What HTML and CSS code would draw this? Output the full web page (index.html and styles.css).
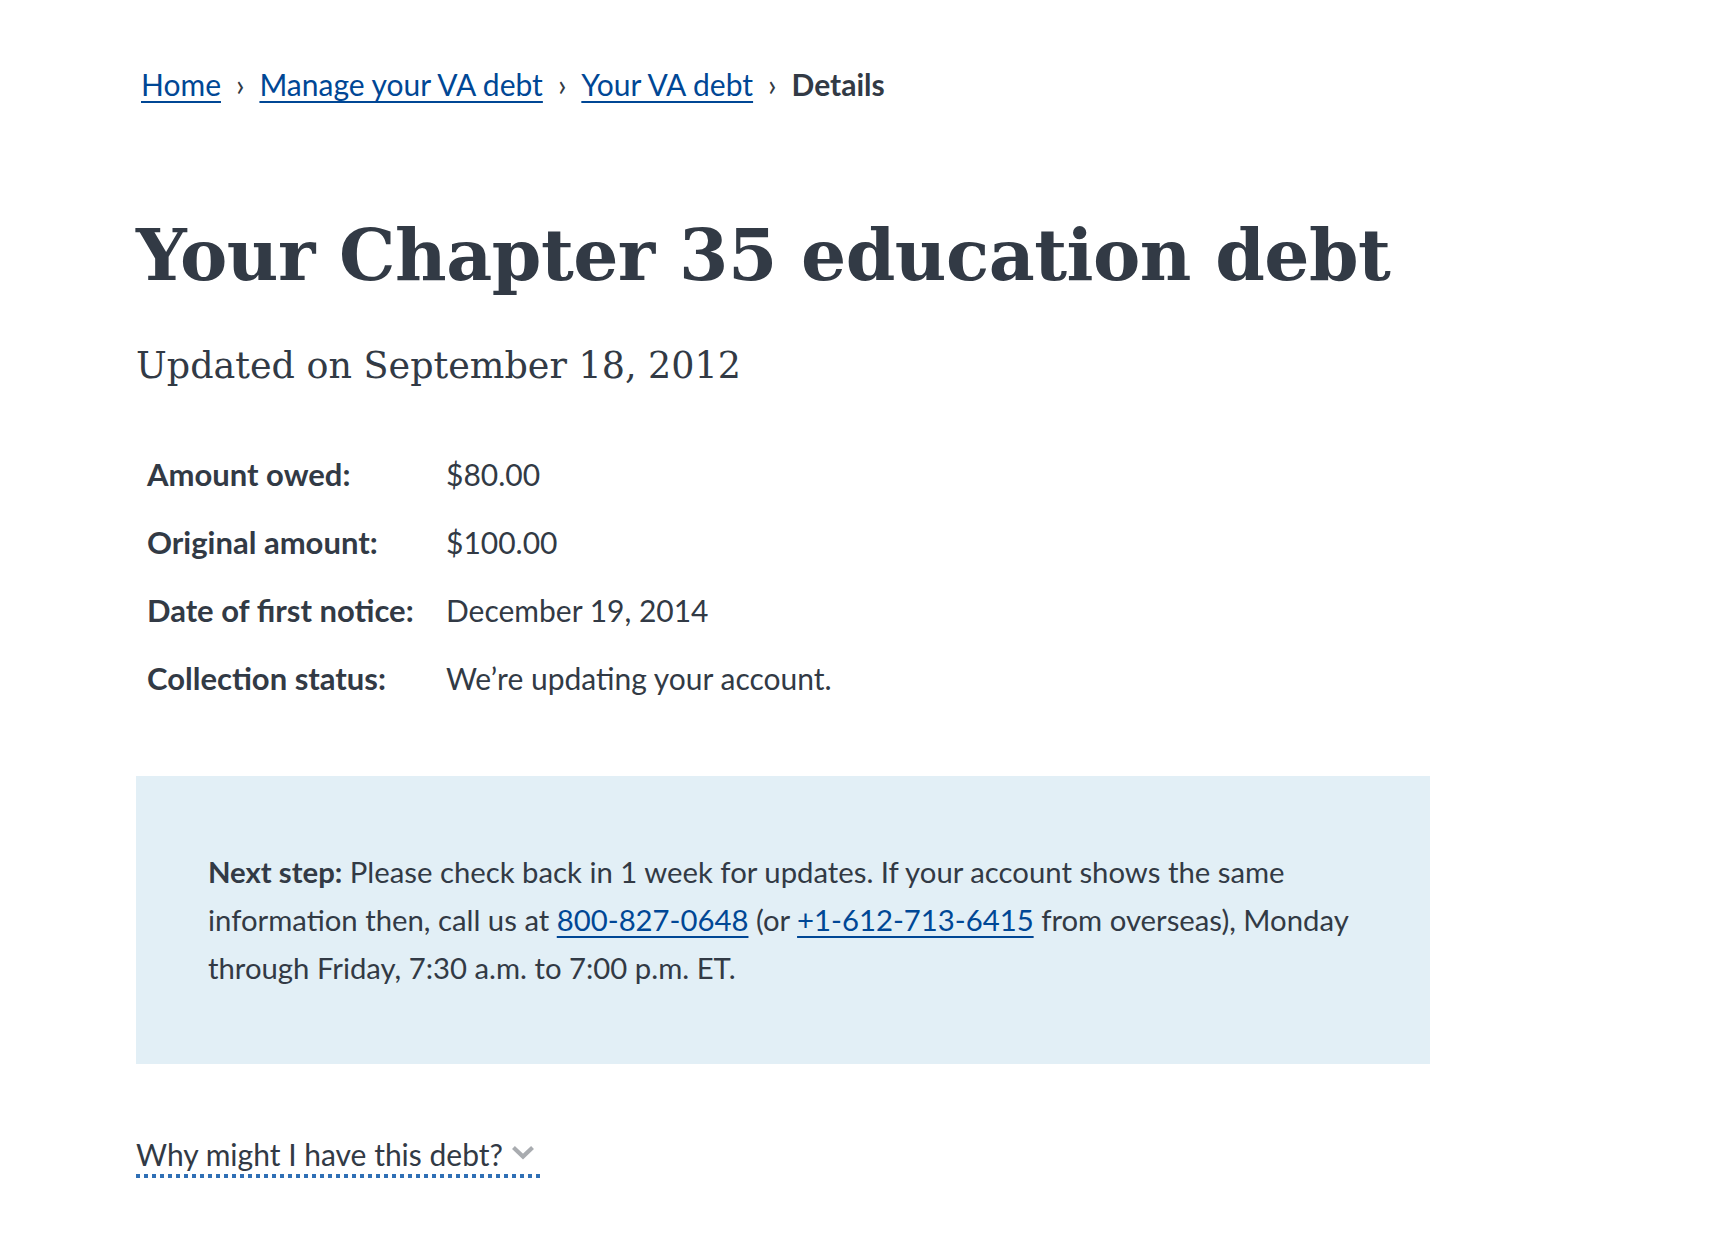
FILE: index.html
```html
<!DOCTYPE html>
<html lang="en">
<head>
<meta charset="utf-8">
<title>Your Chapter 35 education debt</title>
<link rel="stylesheet" href="styles.css">
</head>
<body>
<main class="page">
  <nav class="breadcrumbs" aria-label="Breadcrumb">
    <a href="#" class="crumb">Home</a><span class="sep">›</span><a href="#" class="crumb">Manage your VA debt</a><span class="sep">›</span><a href="#" class="crumb">Your VA debt</a><span class="sep">›</span><span class="current">Details</span>
  </nav>

  <h1 class="title">Your Chapter 35 education debt</h1>
  <h2 class="updated">Updated on September 18, 2012</h2>

  <dl class="facts">
    <div class="fact"><dt>Amount owed:</dt><dd>$80.00</dd></div>
    <div class="fact"><dt>Original amount:</dt><dd>$100.00</dd></div>
    <div class="fact"><dt>Date of first notice:</dt><dd>December 19, 2014</dd></div>
    <div class="fact"><dt>Collection status:</dt><dd>We’re updating your account.</dd></div>
  </dl>

  <div class="alert">
    <p><strong>Next step:</strong> Please check back in 1 week for updates. If your account shows the same information then, call us at <a href="#">800-827-0648</a> (or <a href="#">+1-612-713-6415</a> from overseas), Monday through Friday, 7:30 a.m. to 7:00 p.m. ET.</p>
  </div>

  <button class="why" type="button">Why might I have this debt?<svg class="chev" width="22" height="14" viewBox="0 0 22 14" aria-hidden="true"><path d="M3 3 L11 10.5 L19 3" fill="none" stroke="#a9acb0" stroke-width="4.2" stroke-linecap="square"/></svg></button>
</main>
</body>
</html>
```
FILE: styles.css
```css
html, body {
  margin: 0;
  padding: 0;
  background: #ffffff;
}

body {
  color: #323a45;
  font-family: Lato, "Noto Sans", sans-serif;
}

.page {
  padding: 63px 0 120px 136px;
}

.breadcrumbs {
  padding-left: 5px;
  font-size: 30px;
  line-height: 42px;
  height: 42px;
  white-space: nowrap;
}

.crumb {
  color: #004795;
  text-decoration: underline;
  text-decoration-thickness: 2px;
  text-underline-offset: 5px;
}

.sep {
  display: inline-block;
  padding: 0 15px;
  color: #323a45;
}

.current {
  font-weight: 700;
}

.title {
  margin: 114px 0 0;
  font-family: "DejaVu Serif", serif;
  font-weight: 700;
  font-size: 71px;
  line-height: 72px;
  letter-spacing: -0.5px;
}

.updated {
  margin: 53px 0 0;
  font-family: "DejaVu Serif", serif;
  font-weight: 400;
  font-size: 36.5px;
  line-height: 44px;
}

.facts {
  margin: 52px 0 0;
  padding-left: 11px;
  font-size: 30px;
}

.fact {
  display: grid;
  grid-template-columns: 299px 1fr;
  padding: 12px 0;
  line-height: 44px;
  height: 44px;
}

.fact dt {
  font-weight: 700;
  font-size: 31px;
}

.fact dd {
  margin: 0;
}

.alert {
  margin-top: 64px;
  width: 1294px;
  height: 288px;
  box-sizing: border-box;
  padding: 72px 50px 72px 72px;
  background: #e2eff6;
}

.alert p {
  margin: 0;
  font-size: 29.3px;
  line-height: 48px;
}

.alert a {
  color: #004795;
  text-decoration-thickness: 2px;
  text-underline-offset: 5px;
}

.why {
  display: inline-flex;
  align-items: center;
  gap: 9px;
  margin-top: 73px;
  padding: 0 7px 6px 0;
  border: 0;
  background-color: transparent;
  background-image: linear-gradient(to right, #2f6fb5 50%, transparent 50%);
  background-size: 8px 4px;
  background-repeat: repeat-x;
  background-position: left bottom;
  color: #323a45;
  font-family: Lato, "Noto Sans", sans-serif;
  font-size: 30px;
  line-height: 35px;
  cursor: pointer;
}

.chev {
  display: block;
  margin-top: -4px;
}
```
